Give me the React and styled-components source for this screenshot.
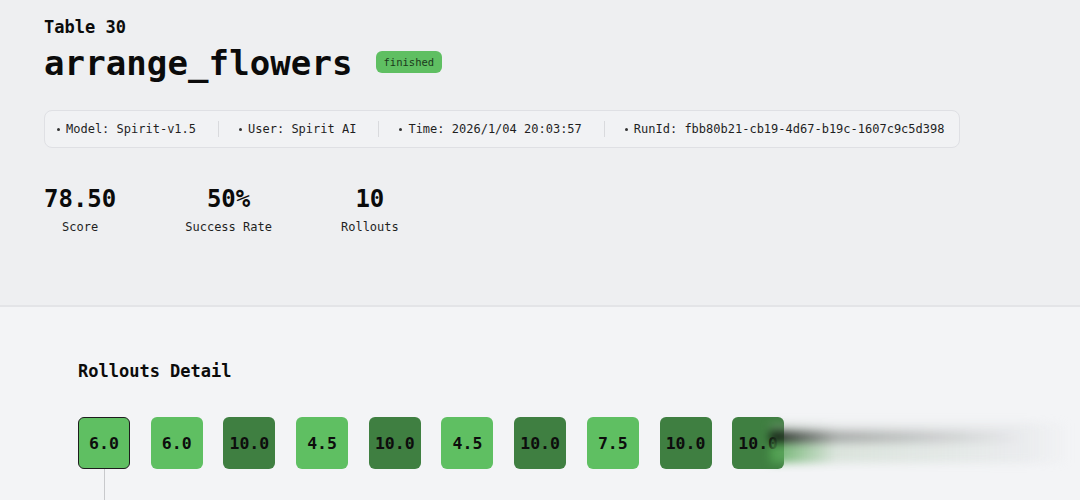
import React from "react";
import styled, { createGlobalStyle } from "styled-components";

const GlobalStyle = createGlobalStyle`
  html, body {
    margin: 0;
    padding: 0;
    background: #f3f4f6;
  }
  body {
    font-family: "DejaVu Sans Mono", "Liberation Mono", monospace;
    color: #0b0b0b;
  }
`;

const Page = styled.div`
  width: 1080px;
  height: 500px;
  overflow: hidden;
  display: flex;
  flex-direction: column;
`;

const Header = styled.section`
  background: #eeeff1;
  border-bottom: 2px solid #e3e4e7;
  height: 307px;
  flex-shrink: 0;
  box-sizing: border-box;
  padding: 16px 44px 0;
`;

const Subtitle = styled.div`
  font-size: 17px;
  font-weight: bold;
  line-height: 22px;
`;

const TitleRow = styled.div`
  display: flex;
  align-items: center;
  gap: 23px;
  margin-top: 3px;
`;

const Title = styled.h1`
  margin: 0;
  font-size: 34px;
  font-weight: bold;
  line-height: 44px;
  letter-spacing: 0.1px;
`;

const Badge = styled.span`
  background: #5fbf62;
  color: #1b3a1c;
  font-size: 10.5px;
  line-height: 22px;
  padding: 0 8px;
  border-radius: 6px;
  margin-top: -3px;
`;

const InfoBar = styled.div`
  margin-top: 25px;
  width: 916px;
  height: 38px;
  box-sizing: border-box;
  display: flex;
  align-items: center;
  border: 1px solid #dfe0e4;
  border-radius: 8px;
  background: #f1f2f4;
  padding: 0 0 0 12px;
`;

const InfoItem = styled.div`
  display: flex;
  align-items: center;
  flex-shrink: 0;
  white-space: nowrap;
  gap: 6px;
  font-size: 12px;
  line-height: 16px;
  color: #1f1f1f;
  padding: 0 22px 0 0;
  & + & {
    border-left: 1px solid #d9dadd;
    padding-left: 20px;
  }
`;

const Dot = styled.span`
  width: 3px;
  height: 3px;
  border-radius: 50%;
  background: #333;
  margin-top: 1px;
`;

const Stats = styled.div`
  display: flex;
  gap: 69px;
  margin-top: 36px;
`;

const Stat = styled.div`
  display: flex;
  flex-direction: column;
  align-items: center;
`;

const StatValue = styled.div`
  font-size: 24px;
  font-weight: bold;
  line-height: 30px;
`;

const StatLabel = styled.div`
  font-size: 12px;
  line-height: 16px;
  margin-top: 5px;
  color: #1f1f1f;
`;

const Detail = styled.section`
  flex: 1;
  background: #f3f4f6;
  padding: 53px 78px 0;
`;

const SectionTitle = styled.h2`
  margin: 0;
  font-size: 17px;
  font-weight: bold;
  line-height: 22px;
`;

const Boxes = styled.div`
  position: relative;
  display: flex;
  gap: 20.7px;
  margin-top: 35px;
`;

const Box = styled.div`
  position: relative;
  width: 52px;
  height: 52px;
  flex-shrink: 0;
  box-sizing: border-box;
  border-radius: 6px;
  display: flex;
  align-items: center;
  justify-content: center;
  font-size: 16.5px;
  font-weight: bold;
  color: #0d0d0d;
  background: ${(p) => (p.dark ? "#3f7f41" : "#5fbf62")};
  border: ${(p) => (p.selected ? "1px solid #1d1d1d" : "none")};

  ${(p) =>
    p.selected &&
    `
    &::after {
      content: "";
      position: absolute;
      left: 25px;
      top: 51px;
      width: 1px;
      height: 40px;
      background: #c8c9cc;
    }
  `}
`;

const Smear = styled.div`
  position: absolute;
  left: 692px;
  top: 6px;
  width: 300px;
  height: 44px;
  pointer-events: none;
  filter: blur(4px);
  display: flex;
  flex-direction: column;
`;

const SmearBand = styled.div`
  height: ${(p) => p.h}px;
  background: linear-gradient(
    to right,
    ${(p) => p.from} 0%,
    ${(p) => p.mid} 22%,
    rgba(215, 218, 220, 0.3) 85%,
    rgba(220, 222, 224, 0) 100%
  );
`;

const rollouts = [
  { v: "6.0", dark: false, selected: true },
  { v: "6.0", dark: false },
  { v: "10.0", dark: true },
  { v: "4.5", dark: false },
  { v: "10.0", dark: true },
  { v: "4.5", dark: false },
  { v: "10.0", dark: true },
  { v: "7.5", dark: false },
  { v: "10.0", dark: true },
  { v: "10.0", dark: true },
];

const info = [
  "Model: Spirit-v1.5",
  "User: Spirit AI",
  "Time: 2026/1/04 20:03:57",
  "RunId: fbb80b21-cb19-4d67-b19c-1607c9c5d398",
];

const stats = [
  { value: "78.50", label: "Score" },
  { value: "50%", label: "Success Rate" },
  { value: "10", label: "Rollouts" },
];

const App = () => {
  return (
    <Page>
      <GlobalStyle />
      <Header>
        <Subtitle>Table 30</Subtitle>
        <TitleRow>
          <Title>arrange_flowers</Title>
          <Badge>finished</Badge>
        </TitleRow>
        <InfoBar>
          {info.map((t) => (
            <InfoItem key={t}>
              <Dot />
              {t}
            </InfoItem>
          ))}
        </InfoBar>
        <Stats>
          {stats.map((s) => (
            <Stat key={s.label}>
              <StatValue>{s.value}</StatValue>
              <StatLabel>{s.label}</StatLabel>
            </Stat>
          ))}
        </Stats>
      </Header>
      <Detail>
        <SectionTitle>Rollouts Detail</SectionTitle>
        <Boxes>
          {rollouts.map((r, i) => (
            <Box key={i} dark={r.dark} selected={r.selected}>
              {r.v}
            </Box>
          ))}
          <Smear>
            <SmearBand h={8} from="rgba(140,160,140,0.35)" mid="rgba(200,204,200,0.3)" />
            <SmearBand h={12} from="rgba(15,25,15,0.95)" mid="rgba(110,115,110,0.55)" />
            <SmearBand h={20} from="rgba(80,165,80,0.85)" mid="rgba(195,212,195,0.5)" />
          </Smear>
        </Boxes>
      </Detail>
    </Page>
  );
};

export default App;
